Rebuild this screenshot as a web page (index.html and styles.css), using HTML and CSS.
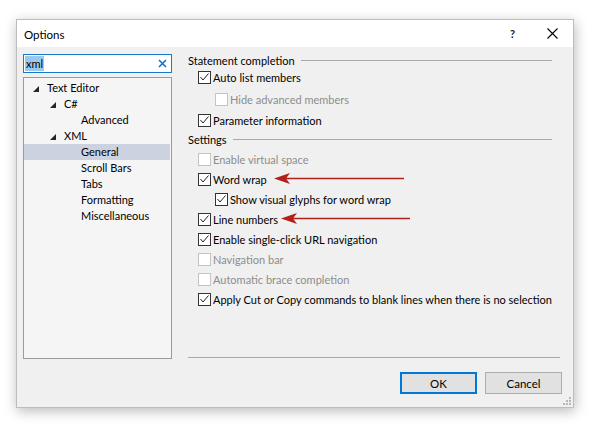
FILE: index.html
```html
<!DOCTYPE html>
<html>
<head>
<meta charset="utf-8">
<link rel="stylesheet" href="styles.css">
</head>
<body>
<div class="dialog">
  <div class="titlebar">
    <span class="title">Options</span>
    <span class="help">?</span>
    <span class="close"><svg width="11" height="11" viewBox="0 0 11 11"><path d="M0.5 0.5 L10.5 10.5 M10.5 0.5 L0.5 10.5" stroke="#000" stroke-width="1.1" fill="none"/></svg></span>
  </div>
  <div class="content">
    <div class="main">
      <div class="left">
        <div class="search">
          <span class="query">xml</span>
          <svg class="clear" width="9" height="9" viewBox="0 0 9 9"><path d="M1 1 L8 8 M8 1 L1 8" stroke="#1a6fc4" stroke-width="1.6" fill="none"/></svg>
        </div>
        <div class="tree">
          <div class="node lvl0"><span class="tri"></span>Text Editor</div>
          <div class="node lvl1"><span class="tri"></span>C#</div>
          <div class="node lvl2">Advanced</div>
          <div class="node lvl1"><span class="tri"></span>XML</div>
          <div class="node lvl2 selected">General</div>
          <div class="node lvl2">Scroll Bars</div>
          <div class="node lvl2">Tabs</div>
          <div class="node lvl2">Formatting</div>
          <div class="node lvl2">Miscellaneous</div>
        </div>
      </div>
      <div class="right">
        <div class="group first">Statement completion</div>
        <div class="opt"><span class="cb on"><svg width="11" height="11" viewBox="0 0 11 11"><path d="M1.5 5 L4 8 L9.5 1.5" stroke="#222" stroke-width="1" fill="none"/></svg></span>Auto list members</div>
        <div class="opt sub dis hide"><span class="cb"></span>Hide advanced members</div>
        <div class="opt param"><span class="cb on"><svg width="11" height="11" viewBox="0 0 11 11"><path d="M1.5 5 L4 8 L9.5 1.5" stroke="#222" stroke-width="1" fill="none"/></svg></span>Parameter information</div>
        <div class="group second">Settings</div>
        <div class="opt dis"><span class="cb"></span>Enable virtual space</div>
        <div class="opt"><span class="cb on"><svg width="11" height="11" viewBox="0 0 11 11"><path d="M1.5 5 L4 8 L9.5 1.5" stroke="#222" stroke-width="1" fill="none"/></svg></span>Word wrap</div>
        <div class="opt sub"><span class="cb on"><svg width="11" height="11" viewBox="0 0 11 11"><path d="M1.5 5 L4 8 L9.5 1.5" stroke="#222" stroke-width="1" fill="none"/></svg></span>Show visual glyphs for word wrap</div>
        <div class="opt"><span class="cb on"><svg width="11" height="11" viewBox="0 0 11 11"><path d="M1.5 5 L4 8 L9.5 1.5" stroke="#222" stroke-width="1" fill="none"/></svg></span>Line numbers</div>
        <div class="opt"><span class="cb on"><svg width="11" height="11" viewBox="0 0 11 11"><path d="M1.5 5 L4 8 L9.5 1.5" stroke="#222" stroke-width="1" fill="none"/></svg></span>Enable single-click URL navigation</div>
        <div class="opt dis"><span class="cb"></span>Navigation bar</div>
        <div class="opt dis"><span class="cb"></span>Automatic brace completion</div>
        <div class="opt"><span class="cb on"><svg width="11" height="11" viewBox="0 0 11 11"><path d="M1.5 5 L4 8 L9.5 1.5" stroke="#222" stroke-width="1" fill="none"/></svg></span>Apply Cut or Copy commands to blank lines when there is no selection</div>
        <div class="sep"></div>
      </div>
    </div>
    <div class="footer">
      <button class="btn default">OK</button>
      <button class="btn">Cancel</button>
    </div>
  </div>
  <svg class="grip" width="10" height="10" viewBox="0 0 10 10">
    <rect x="7" y="1" width="2" height="2" fill="#b8b8b8"/>
    <rect x="4" y="4" width="2" height="2" fill="#b8b8b8"/>
    <rect x="7" y="4" width="2" height="2" fill="#b8b8b8"/>
    <rect x="1" y="7" width="2" height="2" fill="#b8b8b8"/>
    <rect x="4" y="7" width="2" height="2" fill="#b8b8b8"/>
    <rect x="7" y="7" width="2" height="2" fill="#b8b8b8"/>
  </svg>
</div>
<svg class="arrows" width="595" height="429" viewBox="0 0 595 429">
  <line x1="404" y1="178.5" x2="284" y2="178.5" stroke="#b3201b" stroke-width="1.6"/>
  <path d="M274 178.5 L290 173 L286 178.5 L290 184 Z" fill="#b3201b"/>
  <line x1="410" y1="218.5" x2="291" y2="218.5" stroke="#b3201b" stroke-width="1.6"/>
  <path d="M281 218.5 L297 213 L293 218.5 L297 224 Z" fill="#b3201b"/>
</svg>
</body>
</html>
```

FILE: styles.css
```css
html, body {
  margin: 0;
  padding: 0;
  background: #ffffff;
}
body {
  width: 595px;
  height: 429px;
  position: relative;
  overflow: hidden;
  font-family: Lato, "Liberation Sans", sans-serif;
  font-size: 11px;
  color: #000;
}
.dialog {
  position: relative;
  margin: 19px 0 0 16px;
  width: 558px;
  height: 389px;
  box-sizing: border-box;
  border: 1px solid #bdbdbd;
  background: #f0f0f0;
  box-shadow: 1px 3px 12px rgba(0, 0, 0, 0.28);
  display: flex;
  flex-direction: column;
}
.titlebar {
  height: 27px;
  background: #ffffff;
  display: flex;
  align-items: center;
  padding-left: 7px;
  flex: none;
}
.title {
  flex: 1;
  font-size: 11.5px;
  padding-top: 1px;
}
.help {
  font-size: 11px;
  font-weight: bold;
  margin-right: 32px;
  color: #222;
}
.close {
  display: flex;
  margin-right: 15px;
}
.content {
  flex: 1;
  display: flex;
  flex-direction: column;
}
.main {
  display: flex;
  padding: 7px 13px 0 6px;
  height: 305px;
}
.left {
  width: 149px;
  display: flex;
  flex-direction: column;
  gap: 4px;
  flex: none;
}
.search {
  height: 19px;
  box-sizing: border-box;
  border: 1px solid #1979ca;
  background: #fff;
  display: flex;
  align-items: center;
  padding-left: 1px;
  padding-right: 4px;
}
.query {
  background: #99c9ef;
  line-height: 15px;
  padding: 0 1px;
  flex: none;
}
.clear {
  margin-left: auto;
}
.tree {
  flex: 1;
  box-sizing: border-box;
  border: 1px solid #9a9a9f;
  background: #f5f5f5;
  padding-top: 2px;
}
.node {
  height: 16px;
  line-height: 16px;
  display: flex;
  align-items: center;
  margin-right: 1px;
}
.lvl0 { padding-left: 9px; }
.lvl1 { padding-left: 26px; }
.lvl2 { padding-left: 57px; }
.tri {
  width: 0;
  height: 0;
  border-style: solid;
  border-width: 0 0 6px 6px;
  border-color: transparent transparent #262626 transparent;
  margin-right: 8px;
  margin-top: 1px;
}
.selected {
  background: #cdd2e0;
}
.right {
  flex: 1;
  min-width: 0;
  margin-left: 16px;
  display: flex;
  flex-direction: column;
}
.group {
  height: 20px;
  line-height: 20px;
  display: flex;
  align-items: center;
  margin-right: 8px;
}
.group.first {
  height: 13px;
  line-height: 13px;
}
.group.second {
  height: 19px;
}
.group::after {
  content: "";
  flex: 1;
  height: 1px;
  background: #a8a8a8;
  margin-left: 6px;
}
.opt {
  height: 20px;
  display: flex;
  align-items: center;
  padding-left: 10px;
  white-space: nowrap;
}
.opt.sub {
  padding-left: 27px;
}
.opt.hide {
  margin-top: 2px;
}
.opt.param {
  margin-top: 1px;
}
.cb {
  width: 13px;
  height: 13px;
  box-sizing: border-box;
  border: 1px solid #333333;
  background: #ffffff;
  margin-right: 2px;
  display: flex;
  flex: none;
}
.opt.dis {
  color: #8d8d8d;
}
.opt.dis .cb {
  border-color: #c4c4c4;
}
.sep {
  margin-top: auto;
  margin-bottom: 1px;
  height: 1px;
  background: #a8a8a8;
}
.footer {
  display: flex;
  justify-content: flex-end;
  gap: 8px;
  padding: 13px 11px 0 0;
}
.btn {
  width: 77px;
  height: 22px;
  box-sizing: border-box;
  border: 1px solid #adadad;
  background: #e1e1e1;
  font-family: Lato, "Liberation Sans", sans-serif;
  font-size: 11.5px;
  color: #000;
  padding: 0;
}
.btn.default {
  border-color: #0078d7;
  box-shadow: inset 0 0 0 1px #0078d7;
}
.grip {
  position: absolute;
  right: 1px;
  bottom: 1px;
}
.arrows {
  position: absolute;
  left: 0;
  top: 0;
  pointer-events: none;
}
```
